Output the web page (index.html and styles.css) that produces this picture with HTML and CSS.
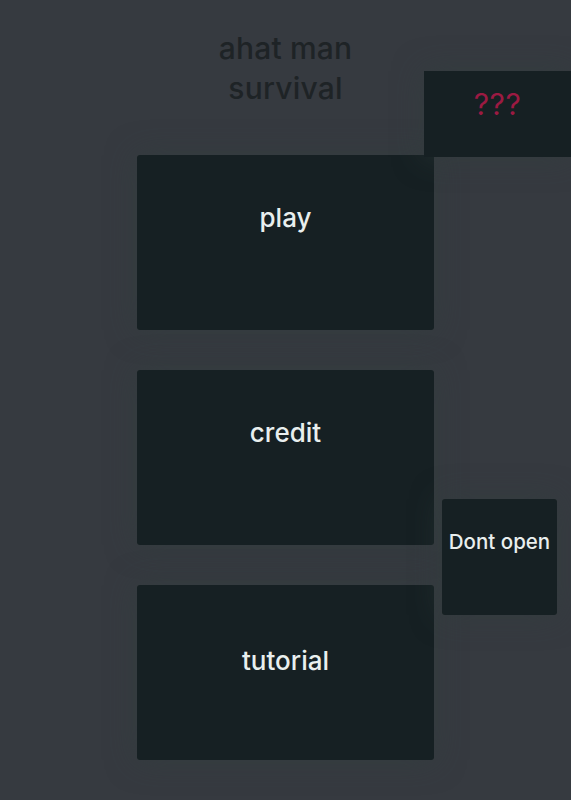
FILE: index.html
```html
<!DOCTYPE html>
<html>
<head>
<meta charset="utf-8">
<link rel="stylesheet" href="styles.css">
</head>
<body>
<div class="page">
  <h1 class="title">ahat man<br>survival</h1>
  <div class="mystery">???</div>
  <div class="layout">
    <div class="cards">
      <div class="card">play</div>
      <div class="card">credit</div>
      <div class="card card-low">tutorial</div>
    </div>
    <div class="side">
      <div class="small-card">Dont open</div>
    </div>
  </div>
</div>
</body>
</html>
```

FILE: styles.css
```css
html, body {
  margin: 0;
  padding: 0;
  background: #363a40;
}
body {
  font-family: Inter, "Noto Sans", sans-serif;
  height: 800px;
  overflow: hidden;
}
.page {
  position: relative;
  padding-left: 137px;
  padding-top: 28px;
}
.title {
  margin: 0;
  width: 297px;
  text-align: center;
  font-size: 30px;
  line-height: 40px;
  font-weight: 500;
  color: #1e2326;
  letter-spacing: 0.2px;
}
.mystery {
  position: absolute;
  top: 71px;
  left: 424px;
  width: 147px;
  height: 86px;
  box-sizing: border-box;
  padding-top: 17px;
  text-align: center;
  background: #162023;
  color: #9c1a42;
  font-size: 30px;
  line-height: 32px;
  font-weight: 400;
  letter-spacing: 0.5px;
  box-shadow: 0 0 30px rgba(50, 64, 62, 0.55);
}
.layout {
  display: flex;
  gap: 8px;
  margin-top: 47px;
}
.cards {
  display: flex;
  flex-direction: column;
  gap: 40px;
  width: 297px;
}
.card {
  height: 175px;
  box-sizing: border-box;
  padding-top: 48px;
  background: #162023;
  border-radius: 3px;
  color: #e9efee;
  text-align: center;
  font-size: 26px;
  font-weight: 500;
  line-height: 30px;
  box-shadow: 0 0 30px rgba(50, 64, 62, 0.55);
}
.card-low {
  padding-top: 61px;
}
.side {
  padding-top: 344px;
}
.small-card {
  width: 115px;
  height: 116px;
  box-sizing: border-box;
  padding-top: 31px;
  background: #162023;
  border-radius: 3px;
  color: #e9efee;
  text-align: center;
  font-size: 20.5px;
  font-weight: 500;
  line-height: 24px;
  white-space: nowrap;
  box-shadow: 0 0 30px rgba(50, 64, 62, 0.55);
}
```
